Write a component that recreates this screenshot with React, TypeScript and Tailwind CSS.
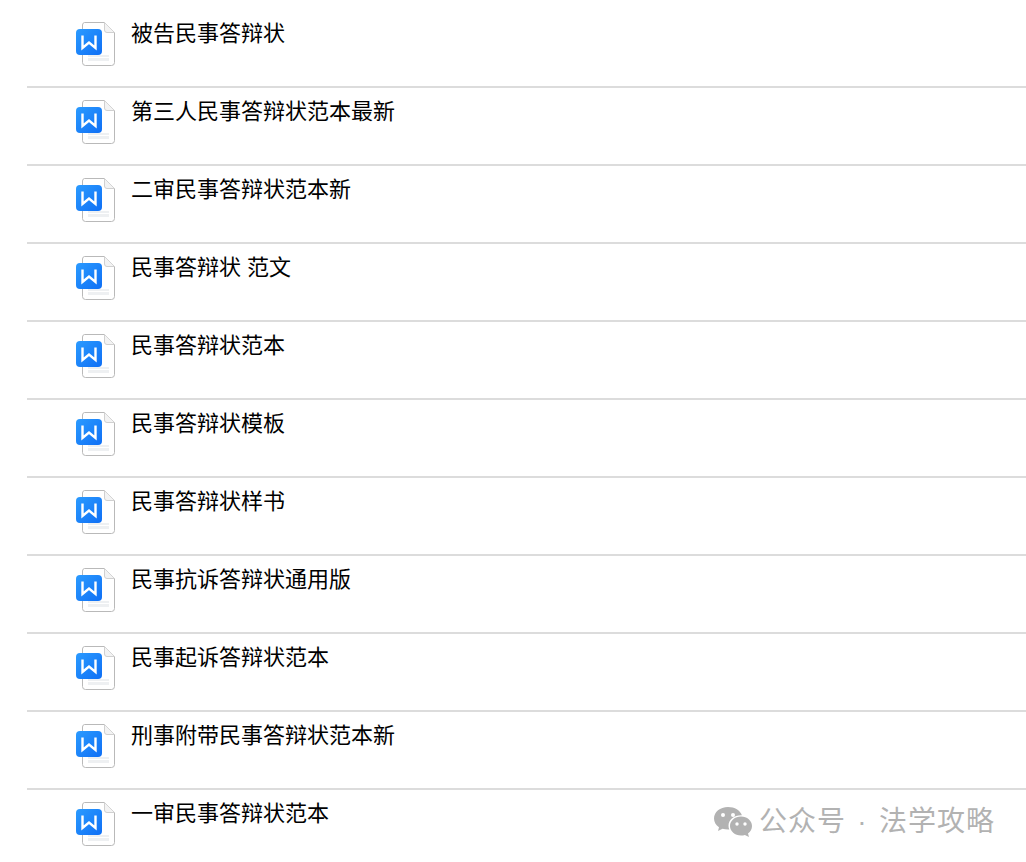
const files = [
  "被告民事答辩状",
  "第三人民事答辩状范本最新",
  "二审民事答辩状范本新",
  "民事答辩状 范文",
  "民事答辩状范本",
  "民事答辩状模板",
  "民事答辩状样书",
  "民事抗诉答辩状通用版",
  "民事起诉答辩状范本",
  "刑事附带民事答辩状范本新",
  "一审民事答辩状范本",
];

function WordIcon() {
  return (
    <svg width="40" height="45" viewBox="0 0 40 45" className="shrink-0">
      <defs>
        <linearGradient id="wordBlue" x1="0" y1="0" x2="1" y2="1">
          <stop offset="0" stopColor="#2b9bff" />
          <stop offset="1" stopColor="#0f6ff5" />
        </linearGradient>
      </defs>
      <path
        d="M8.500 0.500H28.500L38.500 10.500V40.500a3 3 0 0 1-3 3H9.500a3 3 0 0 1-3-3V3a2.500 2.500 0 0 1 2-2.500Z"
        fill="#fff"
        stroke="#b9b9b9"
      />
      <path d="M28.500 0.500V8a2.500 2.500 0 0 0 2.500 2.500H38.500" fill="#f3f3f3" stroke="#d0d0d0" />
      <rect x="12" y="33" width="21" height="2" fill="#eef0f2" />
      <rect x="12" y="36" width="21" height="3" fill="#eef0f2" />
      <rect x="0" y="7" width="26" height="26" rx="4" fill="url(#wordBlue)" />
      <path
        d="M6.500 13.500V26L13 20.500L19.500 26V13.500"
        fill="none"
        stroke="#fff"
        strokeWidth="2.400"
        strokeLinejoin="miter"
      />
    </svg>
  );
}

function WechatIcon() {
  return (
    <svg width="40" height="32" viewBox="0 0 40 32" className="shrink-0">
      <path d="M15 1C7 1 1 6 1 12.500c0 3.600 1.900 6.600 5 8.800L5 25l4.500-2.300c1.700.5 3.500.8 5.500.8h1.300c-.5-1.300-.8-2.500-.8-3.800 0-6 5.600-10.500 12.500-10.500h.9C27.300 4.500 21.700 1 15 1Z" fill="#b2b2b2" />
      <circle cx="10" cy="9" r="2" fill="#fff" />
      <circle cx="20" cy="9" r="2" fill="#fff" />
      <path d="M39 20c0-5.300-5-9.500-11-9.500S17 14.700 17 20s5 9.500 11 9.500c1.400 0 2.700-.2 3.900-.6L36 31l-1-3.500c2.500-1.800 4-4.500 4-7.500Z" fill="#b2b2b2" />
      <circle cx="24" cy="18" r="1.700" fill="#fff" />
      <circle cx="32" cy="18" r="1.700" fill="#fff" />
    </svg>
  );
}

export default function App() {
  return (
    <div className="relative h-[862px] overflow-hidden bg-white pt-[10px] pl-[27px] font-['Liberation_Sans','Noto_Sans_CJK_SC',sans-serif]">
      {files.map((name) => (
        <div
          key={name}
          className="flex h-[78px] items-start gap-[15px] border-b-2 border-[#dcdcdc] pl-[49px] pt-[12px]"
        >
          <WordIcon />
          <span className="text-[22px] leading-[24px] text-black">{name}</span>
        </div>
      ))}
      <div className="absolute top-[804px] left-[713px] flex items-center text-[28px] leading-[36px] tracking-[1px] text-[#b2b2b2]">
        <WechatIcon />
        <span className="ml-[6px]">公众号</span>
        <span className="mx-[6px] w-[21px] text-center">·</span>
        <span>法学攻略</span>
      </div>
    </div>
  );
}
